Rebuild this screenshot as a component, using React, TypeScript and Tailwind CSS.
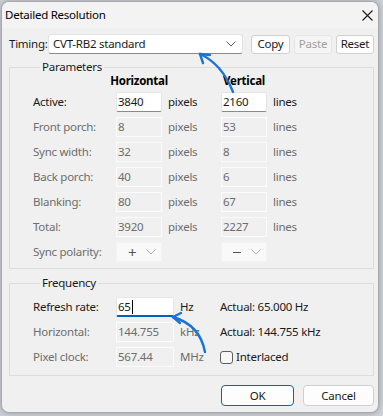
import React from "react";

const F = "font-['Segoe_UI','Noto_Sans',sans-serif]";

function Chevron({ color = "#606060" }: { color?: string }) {
  return (
    <svg width="10" height="6" viewBox="0 0 10 6" fill="none">
      <path d="M0.5 0.5 L5 5 L9.5 0.5" stroke={color} strokeWidth="1" />
    </svg>
  );
}

function EnabledInput({ value, width, focused }: { value: string; width: string; focused?: boolean }) {
  return (
    <div
      className={`${width} h-[20px] bg-white border border-[#e5e5e5] ${
        focused ? "border-b-2 border-b-[#0062b8]" : "border-b-[#8a8a8a]"
      } rounded-[2px] flex items-center pl-[1px] text-[#1a1a1a]`}
    >
      <span>{value}</span>
      {focused && <span className="w-[1px] h-[14px] bg-black ml-[1px]" />}
    </div>
  );
}

function DisabledInput({ value, width }: { value: string; width: string }) {
  return (
    <div className={`${width} h-[20px] bg-[#f0f0f0] border border-[#fbfbfb] flex items-center pl-[1px] text-[#6d6d6d]`}>
      {value}
    </div>
  );
}

function Select({ value, dash }: { value: string; dash?: boolean }) {
  return (
    <div className="w-[46px] h-[20px] bg-[#f9f9f9] border border-[#f3f3f3] flex items-center justify-between pl-[11px] pr-[5px] text-[#555]">
      {dash ? (
        <span className="w-[8px] h-[1px] bg-[#555]" />
      ) : (
        <span className="text-[15px] leading-none">{value}</span>
      )}
      <Chevron color="#b0b0b0" />
    </div>
  );
}

const rows = [
  { label: "Front porch:", h: "8", v: "53" },
  { label: "Sync width:", h: "32", v: "8" },
  { label: "Back porch:", h: "40", v: "6" },
  { label: "Blanking:", h: "80", v: "67" },
  { label: "Total:", h: "3920", v: "2227" },
];

export default function App() {
  return (
    <div className={`w-[383px] h-[416px] bg-[#cdd1d8] relative overflow-hidden ${F} text-[11.5px] tracking-[-0.25px] leading-[16px]`}>
      <div className="ml-[1px] mt-[1px] w-[378px] h-[412px] rounded-[8px] border border-[#a8a8a8] bg-[#f0f0f0] overflow-hidden flex flex-col shadow-[0_0_6px_rgba(0,0,0,0.25)]">
        {/* Title bar */}
        <div className="h-[26px] shrink-0 bg-[#f3f3f3] flex items-center justify-between pl-[3px] pr-[5px]">
          <span className="text-[#000]">Detailed Resolution</span>
          <svg width="11" height="11" viewBox="0 0 11 11">
            <path d="M0.5 0.5 L10.5 10.5 M10.5 0.5 L0.5 10.5" stroke="#1a1a1a" strokeWidth="1.1" />
          </svg>
        </div>

        {/* Timing row */}
        <div className="mt-[6px] h-[20px] flex items-center pl-[7px]">
          <span className="w-[39px] text-[#1a1a1a] whitespace-nowrap">Timing:</span>
          <div className="w-[195px] h-[20px] bg-white border border-[#e3e3e3] border-b-[#8a8a8a] rounded-[3px] flex items-center justify-between pl-[4px] pr-[6px] text-[#1a1a1a]">
            <span>CVT-RB2 standard</span>
            <Chevron />
          </div>
          <div className="ml-[8px] flex gap-[4px]">
            <div className="w-[39px] h-[19px] bg-[#fdfdfd] border border-[#d0d0d0] rounded-[3px] flex items-center justify-center text-[#1a1a1a]">Copy</div>
            <div className="w-[38px] h-[19px] bg-[#f5f5f5] border border-[#e5e5e5] rounded-[3px] flex items-center justify-center text-[#a0a0a0]">Paste</div>
            <div className="w-[38px] h-[19px] bg-[#fdfdfd] border border-[#d0d0d0] rounded-[3px] flex items-center justify-center text-[#1a1a1a]">Reset</div>
          </div>
        </div>

        {/* Parameters */}
        <fieldset className="mt-[6px] ml-[7px] w-[365px] border border-[#dcdcdc] pl-[23px] pb-[6px]">
          <legend className="ml-[7px] px-[2px] leading-[14px] text-[#1a1a1a]">Parameters</legend>
          <div className="h-[14px] flex leading-[14px] font-bold text-[#000]">
            <div className="w-[83px]" />
            <div className="w-[46px] flex justify-center whitespace-nowrap">Horizontal</div>
            <div className="w-[59px]" />
            <div className="w-[46px] flex justify-center whitespace-nowrap">Vertical</div>
          </div>
          <div className="mt-[4px] flex flex-col gap-[5px]">
            <div className="h-[20px] flex items-center">
              <div className="w-[83px] text-[#1a1a1a]">Active:</div>
              <EnabledInput value="3840" width="w-[46px]" />
              <div className="w-[59px] pl-[6px] text-[#1a1a1a]">pixels</div>
              <EnabledInput value="2160" width="w-[46px]" />
              <div className="pl-[6px] text-[#1a1a1a]">lines</div>
            </div>
            {rows.map((r) => (
              <div key={r.label} className="h-[20px] flex items-center text-[#6d6d6d]">
                <div className="w-[83px]">{r.label}</div>
                <DisabledInput value={r.h} width="w-[46px]" />
                <div className="w-[59px] pl-[6px]">pixels</div>
                <DisabledInput value={r.v} width="w-[46px]" />
                <div className="pl-[6px]">lines</div>
              </div>
            ))}
            <div className="h-[20px] flex items-center text-[#6d6d6d]">
              <div className="w-[83px]">Sync polarity:</div>
              <Select value="+" />
              <div className="w-[59px]" />
              <Select value="–" dash />
            </div>
          </div>
        </fieldset>

        {/* Frequency */}
        <fieldset className="mt-[7px] ml-[7px] w-[365px] border border-[#dcdcdc] pl-[23px] pb-[8px]">
          <legend className="ml-[7px] px-[2px] leading-[14px] text-[#1a1a1a]">Frequency</legend>
          <div className="mt-[7px] flex flex-col gap-[5px]">
            <div className="h-[20px] flex items-center text-[#1a1a1a]">
              <div className="w-[83px]">Refresh rate:</div>
              <EnabledInput value="65" width="w-[58px]" focused />
              <div className="w-[46px] pl-[6px]">Hz</div>
              <div>Actual: 65.000 Hz</div>
            </div>
            <div className="h-[20px] flex items-center">
              <div className="w-[83px] text-[#6d6d6d]">Horizontal:</div>
              <DisabledInput value="144.755" width="w-[58px]" />
              <div className="w-[46px] pl-[6px] text-[#6d6d6d]">kHz</div>
              <div className="text-[#1a1a1a]">Actual: 144.755 kHz</div>
            </div>
            <div className="h-[20px] flex items-center">
              <div className="w-[83px] text-[#6d6d6d]">Pixel clock:</div>
              <DisabledInput value="567.44" width="w-[58px]" />
              <div className="w-[46px] pl-[6px] text-[#6d6d6d]">MHz</div>
              <div className="flex items-center gap-[3px] text-[#1a1a1a]">
                <div className="w-[13px] h-[13px] rounded-[3px] border border-[#5e5e5e] bg-[#f7f7f7]" />
                <span>Interlaced</span>
              </div>
            </div>
          </div>
        </fieldset>

        {/* Buttons */}
        <div className="mt-[9px] flex justify-end gap-[9px] pr-[4px]">
          <div className="w-[73px] h-[21px] bg-[#fdfdfd] border border-[#0067c0] rounded-[4px] flex items-center justify-center text-[#1a1a1a]">OK</div>
          <div className="w-[71px] h-[21px] bg-[#fdfdfd] border border-[#d0d0d0] rounded-[4px] flex items-center justify-center text-[#1a1a1a]">Cancel</div>
        </div>
      </div>

      {/* Annotation arrows */}
      <svg className="absolute left-0 top-0 pointer-events-none" width="383" height="416" viewBox="0 0 383 416" fill="none">
        <g stroke="#1b74d3" strokeWidth="2.4" strokeLinecap="round" strokeLinejoin="round">
          <path d="M233 92 Q 222 64 200 54" />
          <path d="M200 54 L210 55" />
          <path d="M200 54 L203 63" />
          <path d="M205 352 Q 200 325 173 317" />
          <path d="M173 317 L181 313" />
          <path d="M173 317 L180 323" />
        </g>
      </svg>
    </div>
  );
}
